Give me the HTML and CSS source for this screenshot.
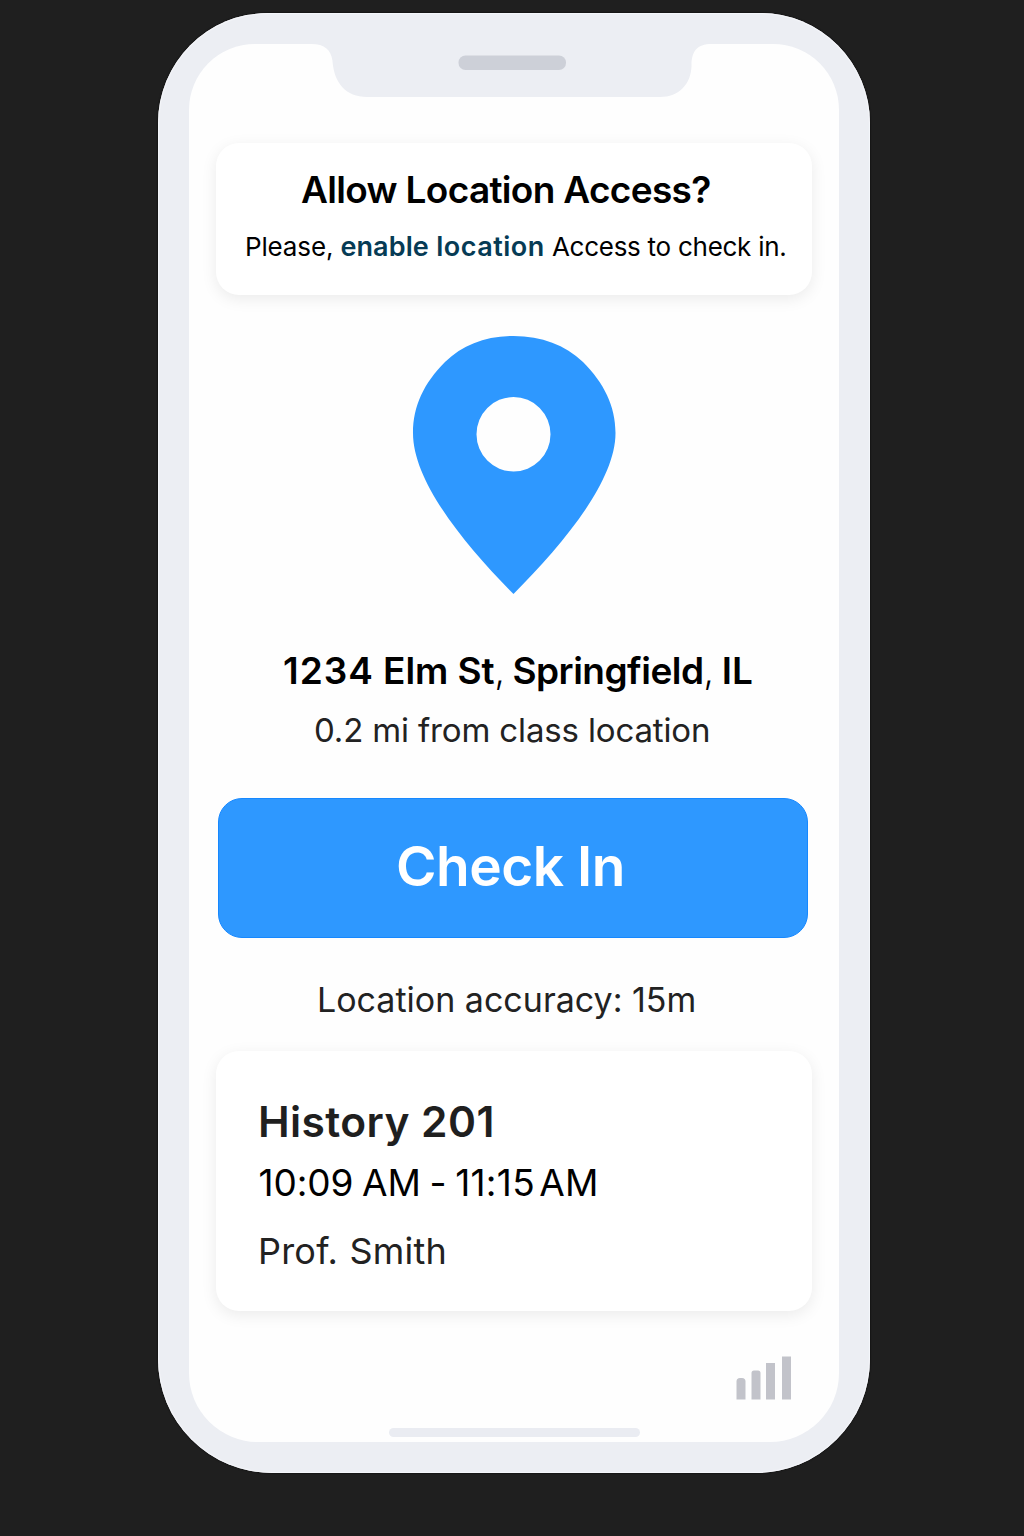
FILE: index.html
```html
<!DOCTYPE html>
<html lang="en">
<head>
<meta charset="utf-8">
<title>Class Check In</title>
<link rel="stylesheet" href="styles.css">
</head>
<body>
<main class="phone">
  <div class="screen">
    <svg class="notch" viewBox="0 0 650 53" aria-hidden="true">
      <path class="notch-body" d="M122 -1V0C136 0 142 6 143.500 17C145 39 157 53 178 53H471C490 53 502 40 502.500 22C502.500 8 507 0 523 0V-1Z"/>
      <rect class="notch-speaker" x="269.500" y="11.500" width="107.500" height="14.500" rx="7"/>
    </svg>
    <section class="card prompt">
      <h1 class="prompt-title">Allow Location Access?</h1>
      <p class="prompt-text">Please, <a class="prompt-link"><span class="link-lead">enable</span> location</a> <span class="prompt-tail">Access to check in.</span></p>
    </section>
    <svg class="pin" viewBox="0 0 204 260" aria-hidden="true">
      <path fill-rule="evenodd" d="M101.500 1C130 1 153 10 171 27C192 48 203.500 71 203.500 98C203.500 147 150 210 101.500 259C53 210 1 147 1 98C1 71 12 48 33 27C51 10 73 1 101.500 1ZM101.500 62A37 37.250 0 1 0 101.500 136.500A37 37.250 0 1 0 101.500 62Z"/>
    </svg>
    <h2 class="address"><span class="street"><span class="number">1234</span> Elm St</span><span class="comma">,</span> <span class="city">Springfield</span><span class="comma">,</span> <span class="state">IL</span></h2>
    <p class="distance">0.2 mi from class location</p>
    <button class="check-in" type="button">Check In</button>
    <p class="accuracy">Location accuracy: 15m</p>
    <section class="card course">
      <h3 class="course-name">History 201</h3>
      <p class="course-time">10:09 AM - <span class="course-end">11:15 AM</span></p>
      <p class="course-teacher">Prof. Smith</p>
    </section>
    <svg class="signal" viewBox="0 0 56 44" aria-hidden="true">
      <path d="M.5 43.500V25.500Q.5 22 4 22H6Q9.500 22 9.500 25.500V43.500ZM15.500 43.500V17Q15.500 14.500 18 14.500H22Q24.500 14.500 24.500 17V43.500ZM30 7H39V43.500H30ZM46 .5H55V43.500H46Z"/>
    </svg>
    <div class="home-bar"></div>
  </div>
</main>
</body>
</html>
```
FILE: styles.css
```css
* { box-sizing: border-box; }

body {
  margin: 0;
  min-height: 1536px;
  padding: 13px 0 0 4px;
  background: #1f1f1f;
  color: #000;
  font-family: Inter, "Liberation Sans", sans-serif;
}

h1, h2, h3, p { margin: 0; white-space: nowrap; }

.phone {
  width: 712px;
  height: 1460px;
  margin: 0 auto;
  padding: 31px;
  border-radius: 110px 110px 114px 114px;
  background: #eceef3;
  box-shadow: 0 0 2px #000, inset 0 0 1px 1px #f6f7fb;
}

.screen {
  display: flex;
  flex-direction: column;
  width: 650px;
  height: 1398px;
  padding-bottom: 5px;
  border-radius: 66px 66px 69px 69px;
  background: #fefefe;
}

.notch { display: block; flex: none; width: 650px; height: 53px; overflow: visible; }
.notch-body { fill: #eceef3; }
.notch-speaker { fill: #cdd0d8; }

.card {
  width: 596px;
  margin-left: 27px;
  border-radius: 23px;
  background: #fff;
  box-shadow: 0 4px 16px rgba(0, 0, 0, .08);
}

.prompt { height: 152px; margin-top: 46px; padding: 25px 0 0 29px; }
.prompt-title { padding-left: 56px; font-size: 37px; line-height: 44px; font-weight: 600; letter-spacing: -.68px; }
.prompt-text { margin-top: 16px; font-size: 26px; line-height: 38px; letter-spacing: -.15px; }
.prompt-link { color: #063b55; font-size: 27px; line-height: 1; font-weight: 600; letter-spacing: .5px; }
.link-lead { font-weight: 600; letter-spacing: .1px; }
.prompt-tail { letter-spacing: -.27px; }

.pin { display: block; flex: none; width: 204px; height: 260px; margin: 40px 0 0 223px; fill: #2e98ff; }

.address { margin: 54px 0 0 94px; font-size: 37px; line-height: 44px; font-weight: 600; letter-spacing: -.5px; }
.street { letter-spacing: -.1px; }
.number { letter-spacing: 1px; }
.city { letter-spacing: -.5px; }
.state { letter-spacing: 0; }
.comma { font-weight: 300; letter-spacing: -1.2px; }
.distance { margin: 17px 0 0 125px; font-size: 33px; line-height: 40px; letter-spacing: -.15px; color: #222; }

.check-in {
  display: block;
  flex: none;
  width: 590px;
  height: 140px;
  margin: 48px 0 0 29px;
  padding: 0 5px 4px 0;
  border: 1px solid #1688ff;
  border-radius: 24px;
  background: #2e98ff;
  color: #fff;
  font: 600 55px/66px Inter, "Liberation Sans", sans-serif;
  letter-spacing: -.5px;
}

.accuracy { margin: 42px 0 0 128px; font-size: 34px; line-height: 40px; color: #222; }

.course { flex: none; height: 260px; margin-top: 31px; padding: 46px 0 0 42px; }
.course-name { font-size: 42.5px; line-height: 50px; font-weight: 600; letter-spacing: .4px; color: #1f1f1f; }
.course-time { margin-top: 14px; padding-left: .5px; font-size: 37px; line-height: 44px; letter-spacing: -.1px; word-spacing: -1.6px; }
.course-end { letter-spacing: .3px; word-spacing: -6.5px; }
.course-teacher { margin-top: 25px; font-size: 36px; line-height: 42px; letter-spacing: .2px; word-spacing: 1px; color: #222; }

.signal { display: block; flex: none; width: 56px; height: 44px; margin: 45px 0 0 547px; fill: #c2c3ca; }
.home-bar { width: 251px; height: 9px; margin: auto 0 0 200px; border-radius: 5px; background: #eaecf2; }
```
